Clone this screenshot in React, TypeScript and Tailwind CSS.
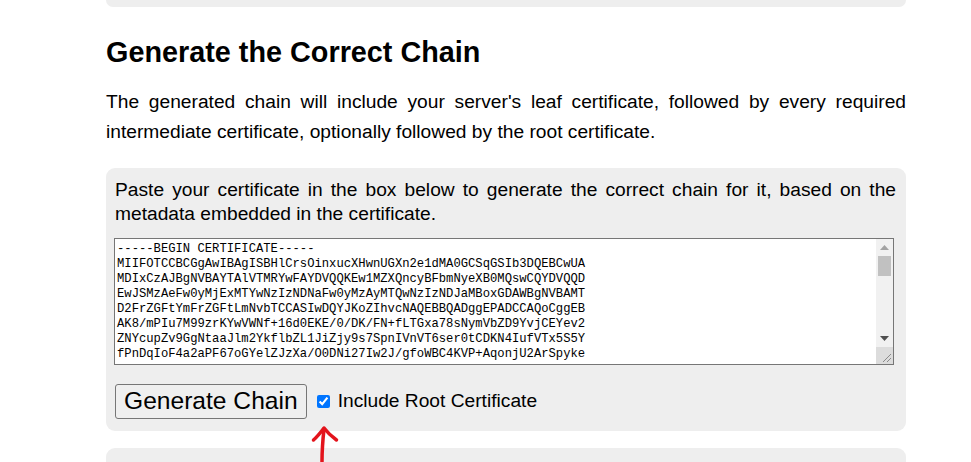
import React from "react";

const certLines = [
  "-----BEGIN CERTIFICATE-----",
  "MIIFOTCCBCGgAwIBAgISBHlCrsOinxucXHwnUGXn2e1dMA0GCSqGSIb3DQEBCwUA",
  "MDIxCzAJBgNVBAYTAlVTMRYwFAYDVQQKEw1MZXQncyBFbmNyeXB0MQswCQYDVQQD",
  "EwJSMzAeFw0yMjExMTYwNzIzNDNaFw0yMzAyMTQwNzIzNDJaMBoxGDAWBgNVBAMT",
  "D2FrZGFtYmFrZGFtLmNvbTCCASIwDQYJKoZIhvcNAQEBBQADggEPADCCAQoCggEB",
  "AK8/mPIu7M99zrKYwVWNf+16d0EKE/0/DK/FN+fLTGxa78sNymVbZD9YvjCEYev2",
  "ZNYcupZv9GgNtaaJlm2YkflbZL1JiZjy9s7SpnIVnVT6ser0tCDKN4IufVTx5S5Y",
  "fPnDqIoF4a2aPF67oGYelZJzXa/O0DNi27Iw2J/gfoWBC4KVP+AqonjU2ArSpyke",
];

const ScrollBar = () => (
  <div className="relative flex w-[17px] flex-col bg-[#f1f1f1]">
    {/* up arrow */}
    <div className="flex h-[17px] items-center justify-center">
      <svg width="9" height="5" viewBox="0 0 9 5">
        <polygon points="0,5 4.5,0 9,5" fill="#a3a3a3" />
      </svg>
    </div>
    {/* thumb */}
    <div className="mx-[2px] h-[20px] bg-[#c1c1c1]" />
    <div className="flex-1" />
    {/* down arrow */}
    <div className="flex h-[17px] items-center justify-center">
      <svg width="9" height="5" viewBox="0 0 9 5">
        <polygon points="0,0 4.5,5 9,0" fill="#505050" />
      </svg>
    </div>
    {/* resizer corner */}
    <div className="relative h-[17px] bg-[#dcdcdc]">
      <svg className="absolute right-[1px] bottom-[1px]" width="12" height="12" viewBox="0 0 12 12">
        <line x1="11" y1="3" x2="3" y2="11" stroke="#8a8a8a" strokeWidth="1" />
        <line x1="11" y1="7" x2="7" y2="11" stroke="#8a8a8a" strokeWidth="1" />
      </svg>
    </div>
  </div>
);

export default function App() {
  return (
    <div className="relative min-h-[462px] bg-white font-['Liberation_Sans',Arial,sans-serif] text-black">
      <div className="mx-[106px] w-[800px]">
        <div className="h-[7px] rounded-b-[9px] bg-[#eeeeee]" />

        <h2 className="mt-[29px] text-[28.8px] leading-[32px] font-bold">
          Generate the Correct Chain
        </h2>

        <p className="mt-[19px] text-justify text-[19.2px] leading-[30px]">
          The generated chain will include your server's leaf certificate, followed by every required intermediate
          certificate, optionally followed by the root certificate.
        </p>

        <div className="mt-[21px] rounded-[9px] bg-[#eeeeee] pt-[10px] pr-[10px] pb-[12px] pl-[9px]">
          <p className="text-justify text-[19.2px] leading-[24px]">
            Paste your certificate in the box below to generate the correct chain for it, based on the metadata
            embedded in the certificate.
          </p>

          <div className="mt-[12px] flex h-[127px] w-[780px] -ml-[1px] border border-[#767676] bg-white">
            <textarea
              readOnly
              spellCheck={false}
              className="flex-1 resize-none overflow-hidden whitespace-pre bg-white pt-[3px] pl-[2px] font-['Liberation_Mono','DejaVu_Sans_Mono',monospace] text-[12.2px] leading-[15px] text-black outline-none"
              value={certLines.join("\n")}
            />
            <ScrollBar />
          </div>

          <div className="mt-[19px] flex items-center">
            <button className="h-[35px] rounded-[3px] border border-[#767676] bg-[#efefef] px-[8px] text-[24.6px] leading-none text-black">
              Generate Chain
            </button>
            <label className="ml-[10px] flex items-center text-[19.2px]">
              <input type="checkbox" defaultChecked className="h-[13px] w-[13px] accent-[#0075ff]" />
              <span className="ml-[8px]">Include Root Certificate</span>
            </label>
          </div>
        </div>

        <div className="mt-[17px] h-[20px] rounded-t-[9px] bg-[#eeeeee]" />
      </div>

      {/* red annotation arrow */}
      <svg className="absolute top-[424px] left-[310px]" width="30" height="38" viewBox="0 0 30 38">
        <path
          d="M3.5 16 C8 12 11 8 14 4 C17 8 21 12 26.5 16"
          fill="none"
          stroke="#e3141c"
          strokeWidth="3.5"
          strokeLinecap="round"
          strokeLinejoin="round"
        />
        <path d="M14 5 C13 14 12 24 12 38" fill="none" stroke="#e3141c" strokeWidth="3.5" strokeLinecap="round" />
      </svg>
    </div>
  );
}
